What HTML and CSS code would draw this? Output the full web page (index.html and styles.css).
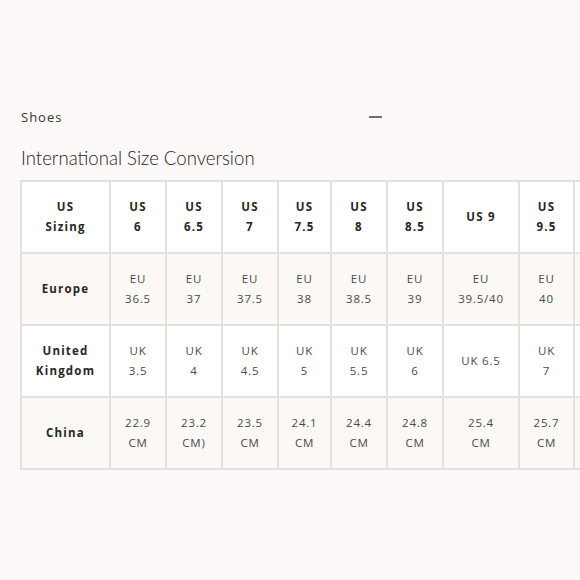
FILE: index.html
```html
<!DOCTYPE html>
<html>
<head>
<meta charset="utf-8">
<link rel="stylesheet" href="styles.css">
</head>
<body>
<div class="page">
  <div class="acc-head">
    <span class="acc-title">Shoes</span>
    <span class="acc-dash"></span>
  </div>
  <h2 class="title">International Size Conversion</h2>
  <table class="sizes">
    <colgroup>
      <col class="c-label"><col class="c56"><col class="c56"><col class="c56"><col class="c53"><col class="c56"><col class="c56"><col class="c76"><col class="c55"><col class="c60">
    </colgroup>
    <tr class="row-head">
      <th>US<br>Sizing</th><th>US<br>6</th><th>US<br>6.5</th><th>US<br>7</th><th>US<br>7.5</th><th>US<br>8</th><th>US<br>8.5</th><th>US 9</th><th>US<br>9.5</th><th></th>
    </tr>
    <tr class="row-tint">
      <th>Europe</th><td>EU<br>36.5</td><td>EU<br>37</td><td>EU<br>37.5</td><td>EU<br>38</td><td>EU<br>38.5</td><td>EU<br>39</td><td>EU<br>39.5/40</td><td>EU<br>40</td><td></td>
    </tr>
    <tr class="row-white">
      <th>United<br>Kingdom</th><td>UK<br>3.5</td><td>UK<br>4</td><td>UK<br>4.5</td><td>UK<br>5</td><td>UK<br>5.5</td><td>UK<br>6</td><td>UK 6.5</td><td>UK<br>7</td><td></td>
    </tr>
    <tr class="row-tint">
      <th>China</th><td>22.9<br>CM</td><td>23.2<br>CM)</td><td>23.5<br>CM</td><td>24.1<br>CM</td><td>24.4<br>CM</td><td>24.8<br>CM</td><td>25.4<br>CM</td><td>25.7<br>CM</td><td></td>
    </tr>
  </table>
</div>
</body>
</html>
```
FILE: styles.css
```css
html, body {
  margin: 0;
  padding: 0;
  background: #fdf9f8;
  overflow: hidden;
  width: 580px;
  height: 580px;
}
.page {
  padding: 108px 0 0 20px;
  font-family: "Open Sans", "Liberation Sans", sans-serif;
}
.acc-head {
  width: 361px;
  display: flex;
  justify-content: space-between;
  align-items: center;
  height: 18px;
  padding-left: 1px;
}
.acc-title {
  font-size: 13px;
  letter-spacing: 1px;
  color: #333;
}
.acc-dash {
  width: 13px;
  height: 1.5px;
  background: #6e6e6e;
}
.title {
  margin: 20px 0 0 1px;
  font-family: "Lato", sans-serif;
  font-weight: 300;
  font-size: 18.6px;
  line-height: 24px;
  color: #222;
  letter-spacing: 0;
}
.sizes {
  margin-top: 10px;
  border-collapse: collapse;
  table-layout: fixed;
  width: 614px;
}
.c-label { width: 89px; }
.c56 { width: 56px; }
.c53 { width: 53px; }
.c76 { width: 76px; }
.c55 { width: 55px; }
.c60 { width: 60px; }
.sizes th, .sizes td {
  border: 2px solid #e3e0dd;
  height: 70px;
  padding: 0;
  text-align: center;
  vertical-align: middle;
  font-size: 11.5px;
  line-height: 20px;
  letter-spacing: 0.8px;
}
.sizes th {
  font-weight: 700;
  color: #262626;
  letter-spacing: 1.2px;
}
.sizes td {
  font-weight: 400;
  color: #4a4a4a;
}
.row-head, .row-white { background: #ffffff; }
.row-tint { background: #fcf8f5; }
```
